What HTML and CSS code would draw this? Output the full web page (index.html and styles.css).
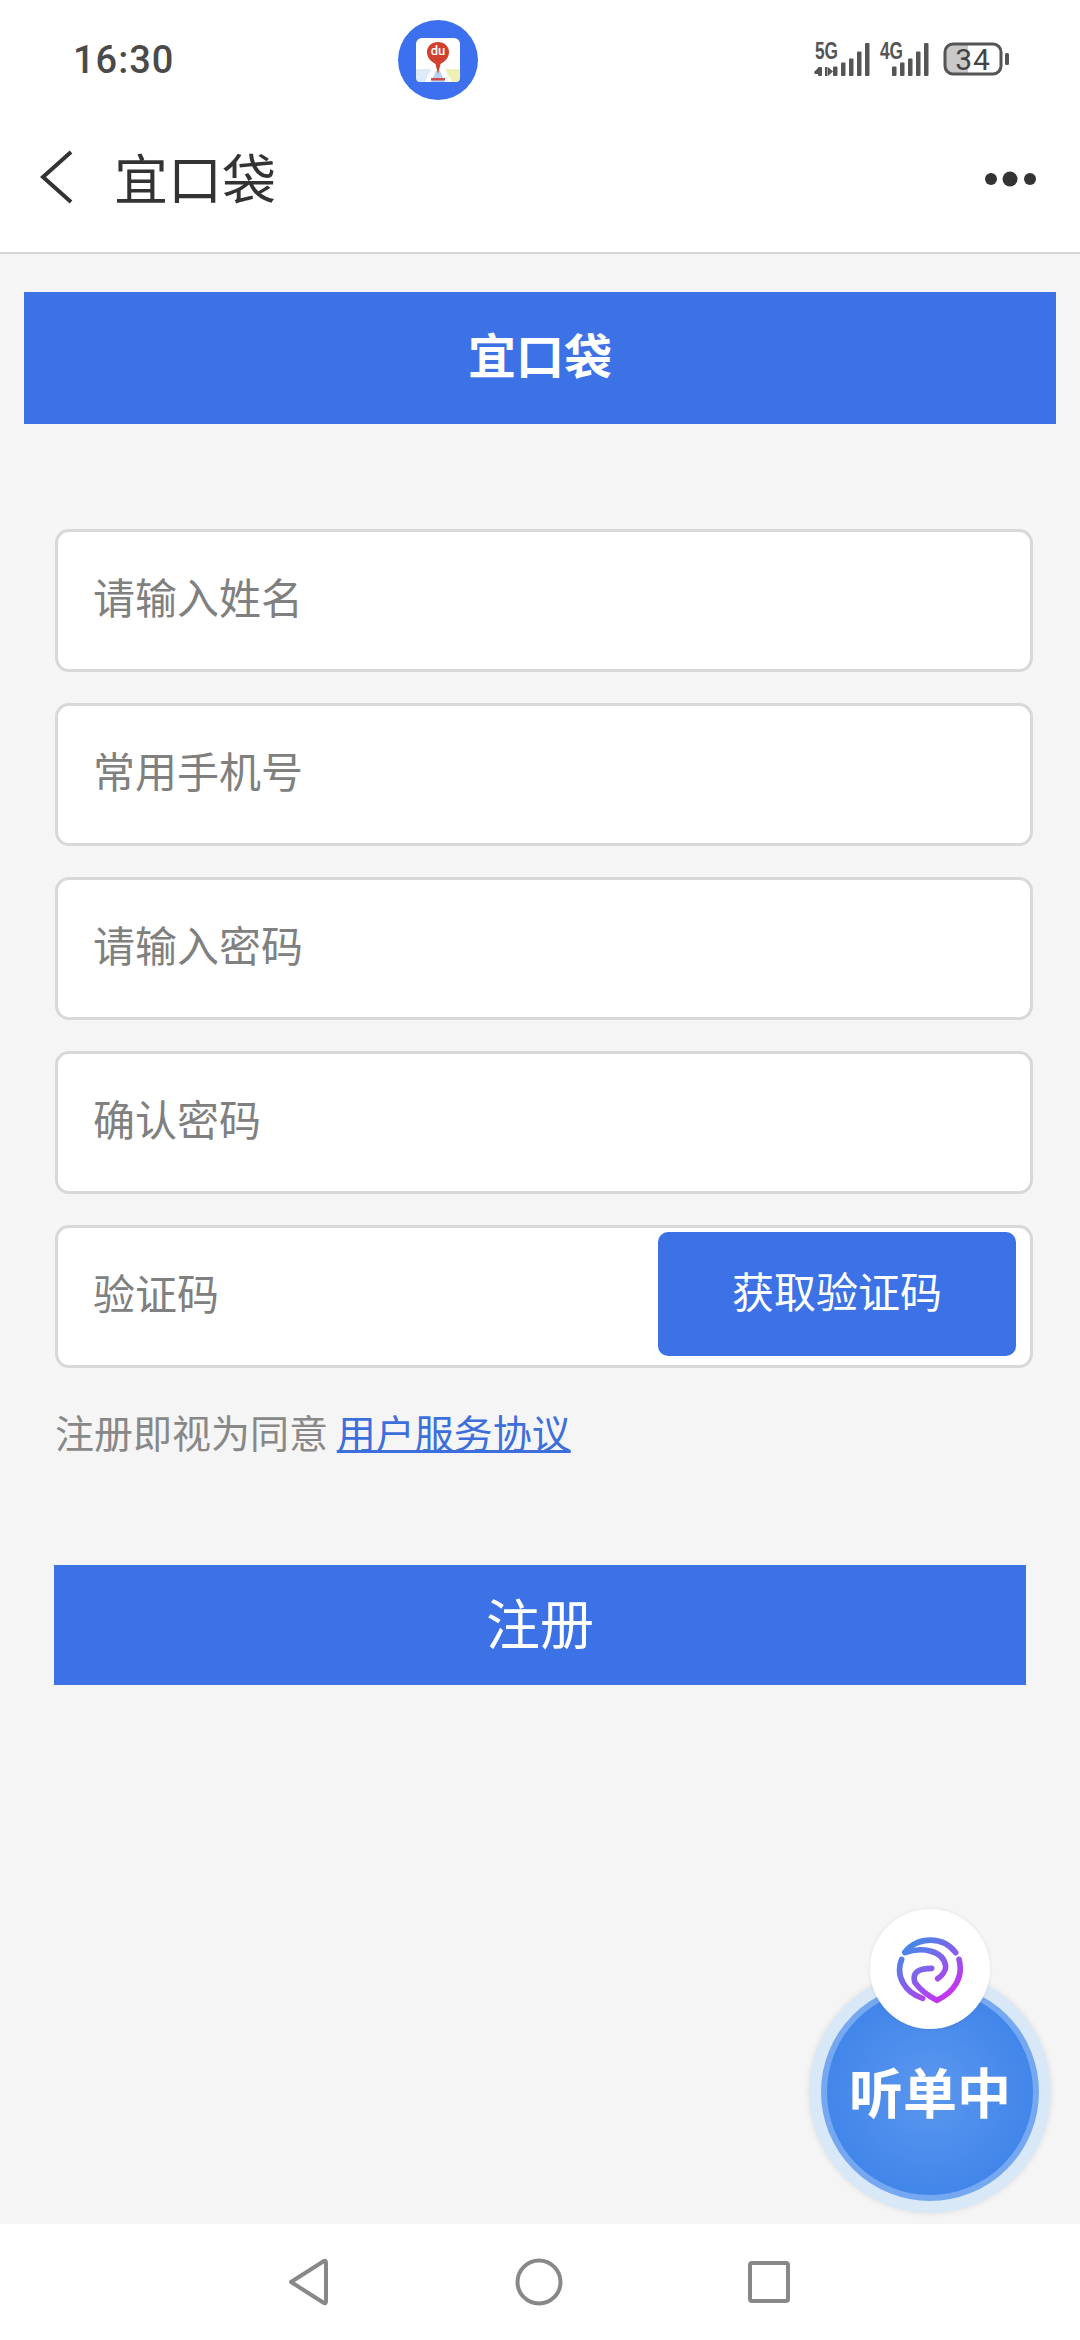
FILE: index.html
```html
<!DOCTYPE html>
<html lang="zh-CN">
<head>
<meta charset="utf-8">
<title>宜口袋</title>
<link rel="stylesheet" href="styles.css">
</head>
<body>
<div class="phone">
  <div class="statusbar">
    <span class="time">16:30</span>
    <span class="app-badge">
      <svg class="du-icon" viewBox="0 0 44 44">
        <rect width="44" height="44" rx="6" fill="#fff"/>
        <path d="M0 31 L15 31 L9 44 L4 44 Q0 44 0 40Z" fill="#dcebf7"/>
        <path d="M29 31 L44 31 L44 40 Q44 44 40 44 L36 44Z" fill="#eff0b4"/>
        <path d="M15 44 L20 33 L24 33 L29 44Z" fill="#b9d3ee"/>
        <rect x="15" y="40" width="14" height="2.500" fill="#c9504f"/>
        <path d="M22 36 L19.500 26 C14 23 11 19 11 14 C11 8 16 4 22 4 C28 4 33 8 33 14 C33 19 30 23 24.500 26Z" fill="#d2412f"/>
        <text class="du-text" x="22" y="17" text-anchor="middle">du</text>
      </svg>
    </span>
    <svg class="status-icons" viewBox="814 30 200 60">
      <text class="net" x="815" y="59" textLength="23" lengthAdjust="spacingAndGlyphs">5G</text>
      <g fill="#555">
        <rect x="818" y="67" width="4" height="9" rx="1"/>
        <path d="M814 72l4-4v6h-3z"/>
        <rect x="825" y="67" width="2.500" height="9"/>
        <path d="M828 67l5 4.500-5 4.500z"/>
        <rect x="833" y="66.500" width="4.500" height="9.500" rx="1"/>
        <rect x="841" y="62.500" width="4.500" height="13.500" rx="1"/>
        <rect x="849" y="58.500" width="4.500" height="17.500" rx="1"/>
        <rect x="857" y="51.500" width="4.500" height="24.500" rx="1"/>
        <rect x="865" y="43" width="4.500" height="33" rx="1"/>
      </g>
      <text class="net" x="880" y="59" textLength="23" lengthAdjust="spacingAndGlyphs">4G</text>
      <g fill="#555">
        <rect x="892" y="66.500" width="4.500" height="9.500" rx="1"/>
        <rect x="900" y="62.500" width="4.500" height="13.500" rx="1"/>
        <rect x="908" y="58.500" width="4.500" height="17.500" rx="1"/>
        <rect x="916" y="51.500" width="4.500" height="24.500" rx="1"/>
        <rect x="924" y="43" width="4.500" height="33" rx="1"/>
      </g>
      <path d="M952 45 H968 V74 H952 Q946 74 946 68 V51 Q946 45 952 45Z" fill="#c9c9c9"/>
      <rect x="945" y="44" width="56" height="30" rx="8" fill="none" stroke="#555" stroke-width="3"/>
      <rect x="1005" y="53" width="4" height="12" rx="1.500" fill="#555"/>
      <text class="batt" x="973" y="70" text-anchor="middle">34</text>
    </svg>
  </div>

  <header class="navbar">
    <svg class="back" viewBox="0 0 34 54"><path d="M31 2 L3 27 L31 52" fill="none" stroke="#333" stroke-width="4"/></svg>
    <h1 class="nav-title">宜口袋</h1>
    <svg class="more" viewBox="0 0 54 16"><circle cx="7" cy="8" r="6" fill="#333"/><circle cx="26" cy="8" r="7.500" fill="#333"/><circle cx="46" cy="8" r="6" fill="#333"/></svg>
  </header>

  <main class="content">
    <div class="banner">宜口袋</div>
    <form class="form">
      <div class="field"><span class="hint">请输入姓名</span></div>
      <div class="field"><span class="hint">常用手机号</span></div>
      <div class="field"><span class="hint">请输入密码</span></div>
      <div class="field"><span class="hint">确认密码</span></div>
      <div class="field field-code">
        <span class="hint">验证码</span>
        <span class="code-btn">获取验证码</span>
      </div>
    </form>
    <p class="terms">注册即视为同意 <a class="terms-link" href="#">用户服务协议</a></p>
    <div class="submit">注册</div>
  </main>

  <div class="fab">
    <div class="fab-ring"><div class="fab-core">听单中</div></div>
    <div class="fab-logo">
      <svg viewBox="345 160 210 208" class="fab-mark">
        <defs>
          <linearGradient id="lg" gradientUnits="userSpaceOnUse" x1="385" y1="175" x2="520" y2="355">
            <stop offset="0" stop-color="#3c8fe6"/>
            <stop offset="1" stop-color="#d22cf0"/>
          </linearGradient>
        </defs>
        <g fill="none" stroke="url(#lg)" stroke-width="17" stroke-linecap="round" stroke-linejoin="round">
          <path d="M375 213 C415 165 490 165 527 215"/>
          <path d="M365 235 C345 285 375 335 428 352"/>
          <path d="M537 235 C552 290 520 335 470 358 C445 345 420 325 405 305 C395 275 415 262 455 262"/>
          <path d="M375 215 C420 198 490 205 497 255 C498 270 485 285 473 293"/>
        </g>
      </svg>
    </div>
  </div>

  <nav class="sysnav">
    <svg class="sys-back" viewBox="0 0 42 48"><path d="M37 3 L4 24 L37 45 Q39 46 39 43 V5 Q39 2 37 3Z" fill="none" stroke="#888" stroke-width="4" stroke-linejoin="round"/></svg>
    <svg class="sys-home" viewBox="0 0 48 48"><circle cx="24" cy="24" r="21.500" fill="none" stroke="#888" stroke-width="4"/></svg>
    <svg class="sys-recent" viewBox="0 0 42 42"><rect x="2" y="2" width="38" height="38" rx="2" fill="none" stroke="#888" stroke-width="4"/></svg>
  </nav>
</div>
</body>
</html>
```
FILE: styles.css
```css
* { box-sizing: border-box; }
html, body { margin: 0; padding: 0; }
body {
  font-family: "Noto Sans CJK SC", "Noto Sans", Roboto, sans-serif;
  background: #f5f5f5;
}
.phone {
  position: relative;
  width: 1080px;
  height: 2340px;
  display: flex;
  flex-direction: column;
  overflow: hidden;
}

/* status bar */
.statusbar {
  height: 118px;
  flex: none;
  background: #fff;
  display: flex;
  align-items: flex-start;
  padding: 20px 0 0 73px;
}
.time {
  font-family: Roboto, sans-serif;
  font-size: 38px;
  font-weight: 500;
  line-height: 40px;
  margin-top: 20px;
  letter-spacing: 1px;
  color: #4a4a4a;
  width: 325px;
}
.app-badge {
  width: 80px;
  height: 80px;
  border-radius: 50%;
  background: #3c70ee;
  display: flex;
  align-items: center;
  justify-content: center;
}
.du-icon { width: 44px; height: 44px; display: block; }
.du-text { font-family: Roboto, sans-serif; font-size: 13px; font-weight: 500; fill: #fff; }
.status-icons {
  width: 200px;
  height: 60px;
  margin: 10px 0 0 336px;
  flex: none;
}
.net {
  font-family: "Liberation Sans", sans-serif;
  font-size: 24px;
  font-weight: 700;
  fill: #555;
}
.batt { font-family: Roboto, sans-serif; font-size: 30px; fill: #444; letter-spacing: 1px; }

/* title bar */
.navbar {
  height: 136px;
  flex: none;
  background: #fff;
  border-bottom: 2px solid #d6d6d6;
  display: flex;
  align-items: center;
  padding: 0 0 16px 40px;
}
.back { width: 34px; height: 54px; flex: none; }
.nav-title {
  margin: 0 0 0 40px;
  font-size: 54px;
  font-weight: 400;
  line-height: 60px;
  color: #333;
  flex: 1;
}
.more { width: 54px; height: 16px; margin: 4px 42px 0 0; flex: none; }

/* content */
.content {
  flex: 1;
  display: flex;
  flex-direction: column;
  padding: 38px 24px 0;
}
.banner {
  height: 132px;
  background: #3d72e7;
  color: #fff;
  font-size: 48px;
  font-weight: 700;
  display: flex;
  align-items: center;
  justify-content: center;
  padding-bottom: 10px;
}
.form {
  margin: 105px 23px 0 31px;
  display: flex;
  flex-direction: column;
  gap: 31px;
}
.field {
  height: 143px;
  background: #fff;
  border: 3px solid #d8d8d8;
  border-radius: 14px;
  padding: 0 14px 10px 35px;
  display: flex;
  align-items: center;
  justify-content: space-between;
}
.hint { font-size: 42px; line-height: 60px; color: #808080; }
.field-code { padding-bottom: 0; }
.field-code .hint { margin-bottom: 10px; }
.code-btn {
  width: 358px;
  height: 124px;
  margin-bottom: 5px;
  background: #3d72e7;
  border-radius: 10px;
  color: #fff;
  font-size: 42px;
  display: flex;
  align-items: center;
  justify-content: center;
  padding-bottom: 10px;
}
.terms {
  margin: 33px 0 0 31px;
  font-size: 39px;
  line-height: 60px;
  color: #888;
}
.terms-link { color: #3d6fdc; text-decoration: underline; }
.submit {
  margin: 104px 30px 0 30px;
  height: 120px;
  background: #3d72e7;
  color: #fff;
  font-size: 54px;
  display: flex;
  align-items: center;
  justify-content: center;
  padding-bottom: 8px;
}

/* floating button */
.fab {
  position: absolute;
  left: 809px;
  top: 1909px;
  width: 242px;
  height: 304px;
}
.fab-ring {
  position: absolute;
  left: 0;
  bottom: 0;
  width: 242px;
  height: 242px;
  border-radius: 50%;
  background: #d9e8f7;
  box-shadow: 0 0 6px rgba(0, 0, 0, 0.1);
  padding: 12px;
}
.fab-core {
  width: 218px;
  height: 218px;
  border-radius: 50%;
  border: 6px solid #75a8f0;
  background: radial-gradient(circle at 50% 50%, #5b97ee 0%, #4286ea 70%, #4083e8 100%);
  color: #fff;
  font-size: 54px;
  font-weight: 700;
  display: flex;
  align-items: center;
  justify-content: center;
  white-space: nowrap;
  padding-bottom: 4px;
}
.fab-logo {
  position: absolute;
  left: 61px;
  top: 0;
  width: 120px;
  height: 120px;
  border-radius: 50%;
  background: #fff;
  box-shadow: 0 0 4px rgba(0, 0, 0, 0.08);
  display: flex;
  align-items: center;
  justify-content: center;
}
.fab-mark { width: 70px; height: 70px; }

/* system nav */
.sysnav {
  height: 116px;
  flex: none;
  background: #fff;
  position: relative;
  display: flex;
  align-items: flex-start;
  padding: 34px 0 0 287px;
}
.sys-back { width: 42px; height: 48px; flex: none; }
.sys-home { width: 48px; height: 48px; margin-left: 186px; flex: none; }
.sys-recent { width: 42px; height: 42px; margin: 3px 0 0 185px; flex: none; }
```
